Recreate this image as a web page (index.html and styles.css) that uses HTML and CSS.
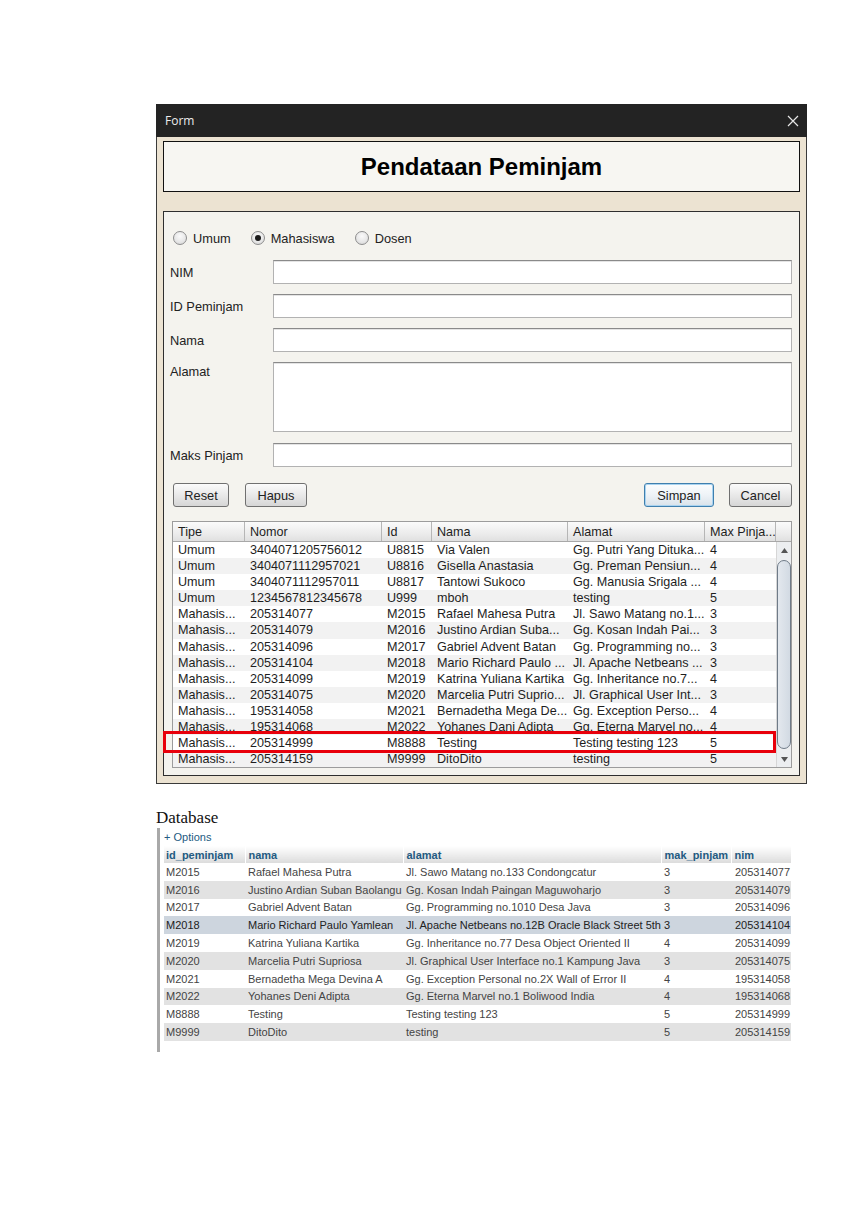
FILE: index.html
```html
<!DOCTYPE html>
<html>
<head>
<meta charset="utf-8">
<link rel="stylesheet" href="styles.css">
</head>
<body>
<div class="page">
  <div class="window">
    <div class="titlebar">
      <span class="title">Form</span>
      <svg class="close" width="12" height="12" viewBox="0 0 12 12"><path d="M1 1 L11 11 M11 1 L1 11" stroke="#e6e6e6" stroke-width="1.2"/></svg>
    </div>
    <div class="frame">
      <div class="header-panel"><h1>Pendataan Peminjam</h1></div>
      <div class="form-panel">
        <div class="radios">
          <label class="radio"><span class="dot"></span>Umum</label>
          <label class="radio"><span class="dot on"></span>Mahasiswa</label>
          <label class="radio"><span class="dot"></span>Dosen</label>
        </div>
        <div class="fields">
          <span class="lbl">NIM</span><div class="input"></div>
          <span class="lbl">ID Peminjam</span><div class="input"></div>
          <span class="lbl">Nama</span><div class="input"></div>
          <span class="lbl top">Alamat</span><div class="input area"></div>
          <span class="lbl">Maks Pinjam</span><div class="input"></div>
        </div>
        <div class="buttons">
          <button class="btn reset">Reset</button>
          <button class="btn hapus">Hapus</button>
          <span class="spacer"></span>
          <button class="btn simpan">Simpan</button>
          <button class="btn cancel">Cancel</button>
        </div>
        <div class="jtable">
          <div class="jt-main">
            <div class="jt-row jt-head">
              <span>Tipe</span><span>Nomor</span><span>Id</span><span>Nama</span><span>Alamat</span><span>Max Pinja...</span>
            </div>
            <div class="jt-body">
              <div class="jt-row"><span>Umum</span><span>3404071205756012</span><span>U8815</span><span>Via Valen</span><span>Gg. Putri Yang Dituka...</span><span>4</span></div>
              <div class="jt-row"><span>Umum</span><span>3404071112957021</span><span>U8816</span><span>Gisella Anastasia</span><span>Gg. Preman Pensiun...</span><span>4</span></div>
              <div class="jt-row"><span>Umum</span><span>3404071112957011</span><span>U8817</span><span>Tantowi Sukoco</span><span>Gg. Manusia Srigala ...</span><span>4</span></div>
              <div class="jt-row"><span>Umum</span><span>1234567812345678</span><span>U999</span><span>mboh</span><span>testing</span><span>5</span></div>
              <div class="jt-row"><span>Mahasis...</span><span>205314077</span><span>M2015</span><span>Rafael Mahesa Putra</span><span>Jl. Sawo Matang no.1...</span><span>3</span></div>
              <div class="jt-row"><span>Mahasis...</span><span>205314079</span><span>M2016</span><span>Justino Ardian Suba...</span><span>Gg. Kosan Indah Pai...</span><span>3</span></div>
              <div class="jt-row"><span>Mahasis...</span><span>205314096</span><span>M2017</span><span>Gabriel Advent Batan</span><span>Gg. Programming no...</span><span>3</span></div>
              <div class="jt-row"><span>Mahasis...</span><span>205314104</span><span>M2018</span><span>Mario Richard Paulo ...</span><span>Jl. Apache Netbeans ...</span><span>3</span></div>
              <div class="jt-row"><span>Mahasis...</span><span>205314099</span><span>M2019</span><span>Katrina Yuliana Kartika</span><span>Gg. Inheritance no.7...</span><span>4</span></div>
              <div class="jt-row"><span>Mahasis...</span><span>205314075</span><span>M2020</span><span>Marcelia Putri Suprio...</span><span>Jl. Graphical User Int...</span><span>3</span></div>
              <div class="jt-row"><span>Mahasis...</span><span>195314058</span><span>M2021</span><span>Bernadetha Mega De...</span><span>Gg. Exception Perso...</span><span>4</span></div>
              <div class="jt-row"><span>Mahasis...</span><span>195314068</span><span>M2022</span><span>Yohanes Dani Adipta</span><span>Gg. Eterna Marvel no...</span><span>4</span></div>
              <div class="jt-row"><span>Mahasis...</span><span>205314999</span><span>M8888</span><span>Testing</span><span>Testing testing 123</span><span>5</span></div>
              <div class="jt-row"><span>Mahasis...</span><span>205314159</span><span>M9999</span><span>DitoDito</span><span>testing</span><span>5</span></div>
            </div>
          </div>
          <div class="jt-side">
            <div class="corner"></div>
            <div class="scrollbar">
              <div class="arrow"><svg width="7" height="5" viewBox="0 0 7 5"><path d="M0 5 L3.5 0 L7 5 Z" fill="#555"/></svg></div>
              <div class="thumb"></div>
              <div class="arrow"><svg width="7" height="5" viewBox="0 0 7 5"><path d="M0 0 L3.5 5 L7 0 Z" fill="#555"/></svg></div>
            </div>
          </div>
        </div>
        <div class="highlight"></div>
      </div>
    </div>
  </div>

  <div class="db-label">Database</div>
  <div class="db">
    <div class="options">+ Options</div>
    <table class="dbt">
      <colgroup><col class="c1"><col class="c2"><col class="c3"><col class="c4"><col class="c5"></colgroup>
      <thead>
        <tr><th>id_peminjam</th><th>nama</th><th>alamat</th><th>mak_pinjam</th><th>nim</th></tr>
      </thead>
      <tbody>
        <tr><td>M2015</td><td>Rafael Mahesa Putra</td><td>Jl. Sawo Matang no.133 Condongcatur</td><td>3</td><td class="r">205314077</td></tr>
        <tr><td>M2016</td><td>Justino Ardian Suban Baolangu</td><td>Gg. Kosan Indah Paingan Maguwoharjo</td><td>3</td><td class="r">205314079</td></tr>
        <tr><td>M2017</td><td>Gabriel Advent Batan</td><td>Gg. Programming no.1010 Desa Java</td><td>3</td><td class="r">205314096</td></tr>
        <tr class="sel"><td>M2018</td><td>Mario Richard Paulo Yamlean</td><td>Jl. Apache Netbeans no.12B Oracle Black Street 5th</td><td>3</td><td class="r">205314104</td></tr>
        <tr><td>M2019</td><td>Katrina Yuliana Kartika</td><td>Gg. Inheritance no.77 Desa Object Oriented II</td><td>4</td><td class="r">205314099</td></tr>
        <tr><td>M2020</td><td>Marcelia Putri Supriosa</td><td>Jl. Graphical User Interface no.1 Kampung Java</td><td>3</td><td class="r">205314075</td></tr>
        <tr><td>M2021</td><td>Bernadetha Mega Devina A</td><td>Gg. Exception Personal no.2X Wall of Error II</td><td>4</td><td class="r">195314058</td></tr>
        <tr><td>M2022</td><td>Yohanes Deni Adipta</td><td>Gg. Eterna Marvel no.1 Boliwood India</td><td>4</td><td class="r">195314068</td></tr>
        <tr><td>M8888</td><td>Testing</td><td>Testing testing 123</td><td>5</td><td class="r">205314999</td></tr>
        <tr><td>M9999</td><td>DitoDito</td><td>testing</td><td>5</td><td class="r">205314159</td></tr>
      </tbody>
    </table>
  </div>
</div>
</body>
</html>
```

FILE: styles.css
```css
* { box-sizing: border-box; }
html, body { margin: 0; padding: 0; background: #ffffff; }
body { font-family: "Liberation Sans", Arial, sans-serif; color: #222; }

.page { padding: 104px 0 0 156px; }

.window { width: 651px; }

.titlebar {
  height: 33px;
  background: #232323;
  display: flex;
  align-items: center;
  justify-content: space-between;
  padding: 0 9px 0 9px;
}
.title {
  color: #ececec;
  font-family: "Open Sans", "Noto Sans", sans-serif;
  font-size: 12px;
}
.close { display: block; margin-right: -1px; }

.frame {
  background: #ece3d2;
  border: 1px solid #3a3a3a;
  border-top: none;
  padding: 4px 6px 7px 6px;
}

.header-panel {
  height: 51px;
  border: 1px solid #111;
  background: #f7f6f2;
  display: flex;
  align-items: center;
  justify-content: center;
}
.header-panel h1 {
  margin: 0;
  font-size: 24px;
  font-weight: bold;
  color: #000;
  line-height: 1;
}

.form-panel {
  position: relative;
  margin-top: 19px;
  border: 1px solid #2e2e2e;
  background: #f4f3ee;
  padding: 17px 7px 7px 6px;
}

.radios {
  height: 18px;
  display: flex;
  align-items: center;
  gap: 20px;
  padding-left: 3px;
  font-size: 12.8px;
}
.radio { display: flex; align-items: center; gap: 6px; }
.dot {
  width: 14px; height: 14px;
  border-radius: 50%;
  border: 1px solid #8d8d8d;
  background: radial-gradient(circle at 50% 35%, #fafafa 0%, #e6e6e6 60%, #cfcfcf 100%);
  display: flex; align-items: center; justify-content: center;
}
.dot.on::after {
  content: "";
  width: 6px; height: 6px; border-radius: 50%;
  background: #1a1a1a;
}

.fields {
  margin-top: 13px;
  display: grid;
  grid-template-columns: 103px 519px;
  grid-template-rows: 24px 24px 24px 71px 24px;
  row-gap: 10px;
  font-size: 12.8px;
}
.lbl { align-self: center; }
.lbl.top { align-self: start; padding-top: 2px; }
.input {
  background: #fff;
  border: 1px solid #b2b2b2;
  border-top-color: #8a8a8a;
  box-shadow: inset 0 1px 0 #e4e4e4;
}
.input.area { height: 70px; }

.buttons {
  margin-top: 16px;
  height: 24px;
  display: flex;
}
.spacer { flex: 1; }
.btn {
  height: 24px;
  border: 1px solid #707070;
  border-radius: 3px;
  background: linear-gradient(#fbfbfb, #e9e9e9 50%, #d6d6d6);
  font-family: "Liberation Sans", Arial, sans-serif;
  font-size: 12.8px;
  color: #222;
  padding: 0;
}
.reset { width: 56px; margin-left: 3px; }
.hapus { width: 62px; margin-left: 16px; }
.simpan {
  width: 70px;
  border-color: #3f7fae;
  box-shadow: inset 0 0 0 1px #a9d3f0;
  background: linear-gradient(#fcfdfe, #eef3f7 50%, #d9e2ea);
}
.cancel { width: 63px; margin-left: 15px; }

.jtable {
  margin-top: 14px;
  margin-left: 2px;
  width: 620px;
  height: 247px;
  border: 1px solid #9c9c9c;
  display: flex;
  background: #fff;
}
.jt-main { width: 603px; }
.jt-row {
  display: grid;
  grid-template-columns: 72px 137px 50px 136px 137px 71px;
  height: 16.1px;
  font-size: 12.6px;
  line-height: 15.1px;
  color: #1e1e1e;
}
.jt-row span { padding: 1px 0 0 5px; white-space: nowrap; overflow: hidden; }
.jt-head {
  height: 20px;
  line-height: 19px;
  background: linear-gradient(#fbfbfb, #ececec 60%, #e0e0e0);
  border-bottom: 1px solid #a8a8a8;
}
.jt-head span { border-right: 1px solid #b6b6b6; padding-top: 1px; }
.jt-body { height: 225px; overflow: hidden; }
.jt-body .jt-row:nth-child(even) { background: #f2f2f2; }

.jt-side { width: 15px; display: flex; flex-direction: column; }
.corner {
  height: 20px;
  background: linear-gradient(#fbfbfb, #ececec 60%, #e0e0e0);
  border-bottom: 1px solid #a8a8a8;
}
.scrollbar {
  flex: 1;
  background: #eceef0;
  border-left: 1px solid #d6d6d6;
  display: flex;
  flex-direction: column;
  align-items: center;
}
.arrow { height: 16px; display: flex; align-items: center; justify-content: center; width: 100%; }
.thumb {
  flex: 1;
  width: 14px;
  margin: 2px 0;
  border: 1px solid #6f7b88;
  border-radius: 7px;
  background: linear-gradient(90deg, #e3e8ee, #d2dae3);
}

.highlight {
  position: absolute;
  left: -1px;
  top: 519px;
  width: 613px;
  height: 22px;
  border: 3px solid #e8000b;
}

.db-label {
  margin-top: 24px;
  font-family: "Liberation Serif", "Times New Roman", serif;
  font-size: 17px;
  line-height: 20px;
  color: #111;
}
.db {
  margin-left: 1px;
  width: 636px;
  border-left: 3px solid #a9a9a9;
  padding: 2px 0 11px 4px;
}
.options {
  font-size: 11px;
  line-height: 14px;
  color: #235a81;
  height: 14px;
}
.dbt {
  margin-top: 2px;
  border-collapse: collapse;
  table-layout: fixed;
  width: 627px;
  font-size: 11px;
}
.c1 { width: 81px; } .c2 { width: 158px; } .c3 { width: 258px; } .c4 { width: 70px; } .c5 { width: 60px; }
.dbt th {
  height: 17px;
  padding: 0 0 0 3px;
  text-align: left;
  font-weight: bold;
  color: #235a81;
  background: linear-gradient(#ffffff, #dcdcdc);
  border-right: 1px solid #fff;
  white-space: nowrap;
  overflow: hidden;
}
.dbt th:first-child { padding-left: 2px; }
.dbt td {
  height: 17.8px;
  padding: 0 0 0 3px;
  color: #444;
  white-space: nowrap;
  overflow: hidden;
}
.dbt td:first-child { padding-left: 2px; }
.dbt td.r { text-align: right; padding: 0 1px 0 0; }
.dbt tbody tr:nth-child(even) td { background: #e2e2e2; }
.dbt tbody tr.sel td { background: #cdd5de; color: #222; }
```
